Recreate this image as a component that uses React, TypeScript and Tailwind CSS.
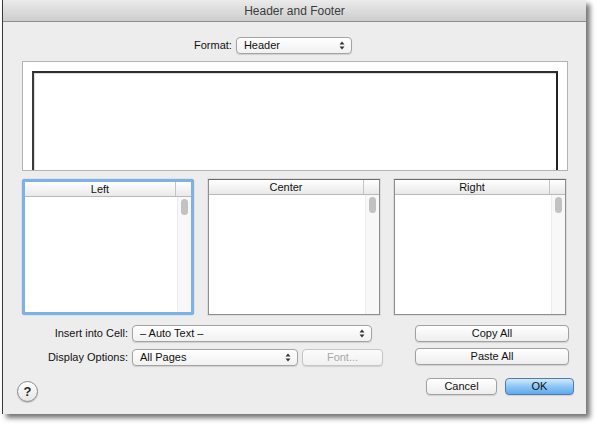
import React from "react";

const font = { fontFamily: '"Liberation Sans", Arial, sans-serif' };

function UpDown({ className = "" }: { className?: string }) {
  return (
    <svg width="6" height="9" viewBox="0 0 6 9" className={className}>
      <path d="M3 0.5 L5.5 3.5 L0.5 3.5 Z" fill="#333" />
      <path d="M3 8.5 L5.5 5.5 L0.5 5.5 Z" fill="#333" />
    </svg>
  );
}

function Select({ label, width, arrows = true }: { label: string; width: string; arrows?: boolean }) {
  return (
    <div
      className={`${width} h-[17px] flex items-center justify-between pl-[7px] pr-[6px] rounded-[4px] border border-[#a3a3a3] bg-gradient-to-b from-white to-[#f1f1f1] shadow-[0_1px_1px_rgba(0,0,0,0.12)] text-[11px] text-[#111]`}
    >
      <span>{label}</span>
      {arrows && <UpDown />}
    </div>
  );
}

function Button({
  children,
  width,
  variant = "normal",
}: {
  children: React.ReactNode;
  width: string;
  variant?: "normal" | "disabled" | "primary";
}) {
  const look =
    variant === "primary"
      ? "border-[#5478b4] bg-gradient-to-b from-[#d4eafc] via-[#8cc6f4] to-[#5eaaee] text-[#101010]"
      : variant === "disabled"
      ? "border-[#c6c6c6] bg-gradient-to-b from-[#fbfbfb] to-[#f1f1f1] text-[#a8a8a8]"
      : "border-[#a0a0a0] bg-gradient-to-b from-white to-[#eeeeee] text-[#111]";
  return (
    <div
      className={`${width} h-[17px] flex items-center justify-center rounded-[4px] border shadow-[0_1px_1px_rgba(0,0,0,0.12)] text-[11px] ${look}`}
    >
      {children}
    </div>
  );
}

function ListBox({ title, focused = false }: { title: string; focused?: boolean }) {
  return (
    <div
      className={`w-[172px] h-[136px] flex flex-col bg-white ${
        focused
          ? "rounded-[3px] border-[3px] border-[#7fb2e2] shadow-[0_0_1px_#3f7fc4]"
          : "border border-[#8e8e8e] border-t-[#6a6a6a] shadow-[0_0_0_1px_#dcdcdc]"
      }`}
    >
      <div className="h-[15px] shrink-0 flex border-b border-[#b9b9b9] bg-gradient-to-b from-white to-[#e9e9e9] text-[11px] text-[#111] leading-none">
        <div className="flex-1 flex items-center justify-center border-r border-[#c4c4c4]">{title}</div>
        <div className="w-[15px]" />
      </div>
      <div className="flex-1 flex">
        <div className="flex-1" />
        <div className="w-[14px] border-l border-[#ececec] bg-[#f8f8f8] pt-[2px] flex justify-center">
          <div className="w-[7px] h-[16px] rounded-full bg-[#c2c2c2]" />
        </div>
      </div>
    </div>
  );
}

export default function App() {
  return (
    <div className="w-[600px] h-[430px] bg-white overflow-hidden" style={font}>
      <div className="ml-[2px] w-[584px] h-[414px] flex flex-col bg-[#ededed] border-l border-[#3a3a3a] shadow-[4px_4px_5px_rgba(0,0,0,0.55)]">
        <div className="h-[22px] shrink-0 flex items-center justify-center border-b border-[#8e8e8e] bg-gradient-to-b from-[#ebebeb] to-[#cdcdcd] text-[12px] text-[#3c3c3c]">
          Header and Footer
        </div>

        <div className="flex-1 flex flex-col pl-[19px] pr-[18px]">
          <div className="mt-[15px] ml-[172px] flex items-center gap-[4px] h-[16px]">
            <span className="text-[11px] text-[#111]">Format:</span>
            <Select label="Header" width="w-[116px]" />
          </div>

          <div className="mt-[8px] h-[110px] flex flex-col border border-[#b3b3b3] bg-white px-[9px] pt-[9px]">
            <div className="flex-1 border-t-[2px] border-l-[2px] border-r-[2px] border-t-[#2e2e2e] border-l-[#3a3a3a] border-r-[#222] shadow-[inset_1px_1px_1px_rgba(0,0,0,0.15)]" />
          </div>

          <div className="mt-[8px] flex gap-[14px]">
            <ListBox title="Left" focused />
            <ListBox title="Center" />
            <ListBox title="Right" />
          </div>

          <div className="mt-[10px] flex justify-between">
            <div className="flex flex-col gap-[7px]">
              <div className="flex items-center gap-[4px]">
                <span className="w-[106px] text-right text-[11px] text-[#111]">Insert into Cell:</span>
                <Select label="– Auto Text –" width="w-[240px]" />
              </div>
              <div className="flex items-center gap-[4px]">
                <span className="w-[106px] text-right text-[11px] text-[#111]">Display Options:</span>
                <Select label="All Pages" width="w-[166px]" />
                <Button width="w-[81px]" variant="disabled">
                  Font...
                </Button>
              </div>
            </div>
            <div className="flex flex-col gap-[6px] -mr-[1px]">
              <Button width="w-[154px]">Copy All</Button>
              <Button width="w-[154px]">Paste All</Button>
            </div>
          </div>

          <div className="mt-[12px] flex justify-between items-start -mr-[6px]">
            <div className="-ml-[5px] mt-[3px] w-[21px] h-[21px] rounded-full border border-[#8a8a8a] bg-gradient-to-b from-white to-[#e6e6e6] shadow-[0_1px_1px_rgba(0,0,0,0.2)] flex items-center justify-center text-[13px] font-bold text-[#2a2a2a]">
              ?
            </div>
            <div className="flex gap-[8px]">
              <Button width="w-[71px]">Cancel</Button>
              <Button width="w-[69px]" variant="primary">
                OK
              </Button>
            </div>
          </div>
        </div>
      </div>
    </div>
  );
}
